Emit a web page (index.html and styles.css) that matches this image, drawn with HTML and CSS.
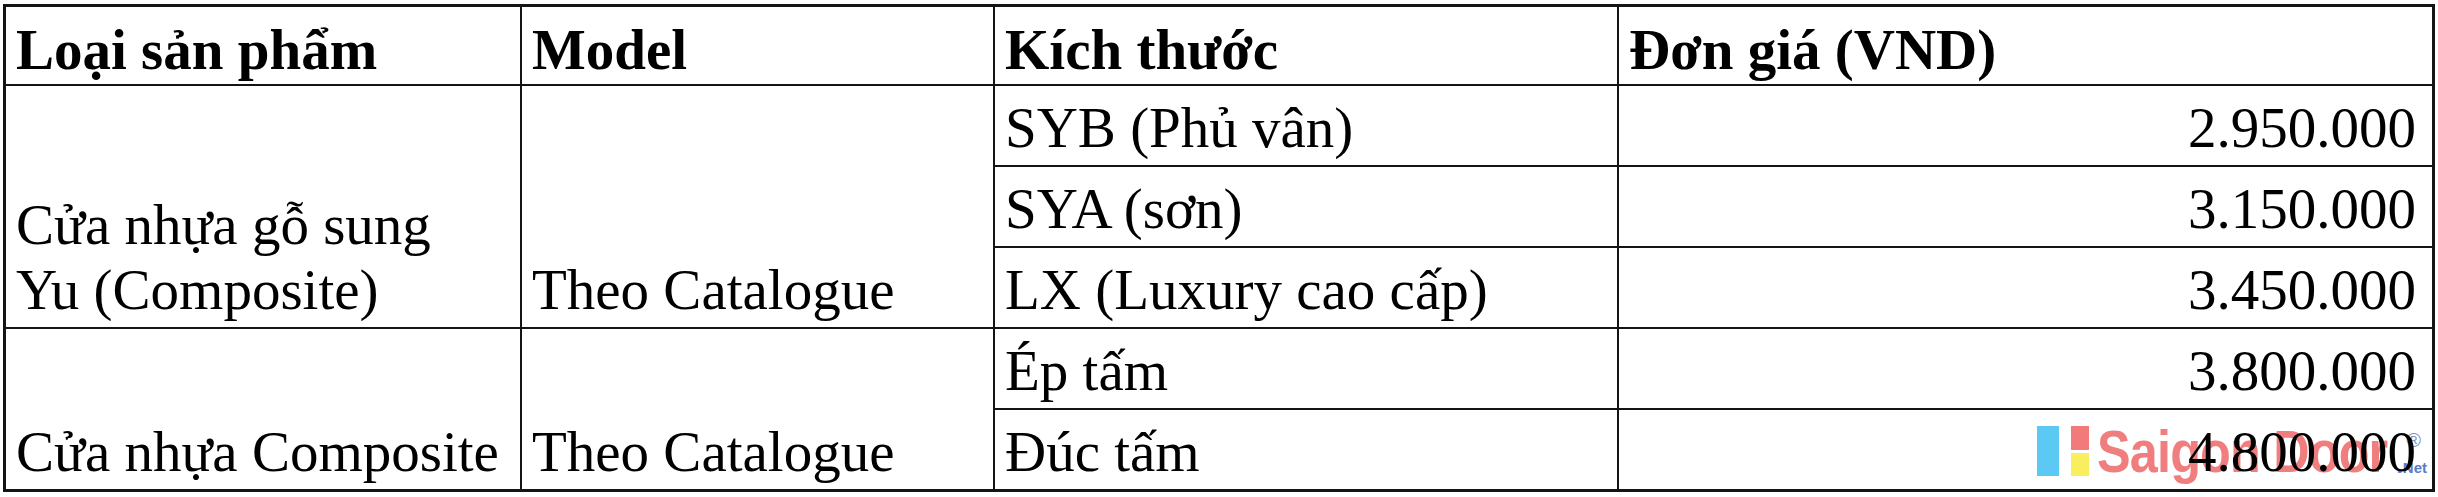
FILE: index.html
```
<!DOCTYPE html>
<html lang="vi">
<head>
<meta charset="utf-8">
<title>Bảng giá cửa nhựa Composite</title>
<link rel="stylesheet" href="styles.css">
</head>
<body>
<div class="sheet">
  <table class="price">
    <colgroup>
      <col class="w1"><col class="w2"><col class="w3"><col class="w4">
    </colgroup>
    <thead>
      <tr class="hdr">
        <th>Loại sản phẩm</th>
        <th>Model</th>
        <th>Kích thước</th>
        <th>Đơn giá (VND)</th>
      </tr>
    </thead>
    <tbody>
      <tr class="row">
        <td rowspan="3">Cửa nhựa gỗ sung<br>Yu (Composite)</td>
        <td rowspan="3">Theo Catalogue</td>
        <td>SYB (Phủ vân)</td>
        <td class="num">2.950.000</td>
      </tr>
      <tr class="row">
        <td>SYA (sơn)</td>
        <td class="num">3.150.000</td>
      </tr>
      <tr class="row">
        <td>LX (Luxury cao cấp)</td>
        <td class="num">3.450.000</td>
      </tr>
      <tr class="row">
        <td rowspan="2">Cửa nhựa Composite</td>
        <td rowspan="2">Theo Catalogue</td>
        <td>Ép tấm</td>
        <td class="num">3.800.000</td>
      </tr>
      <tr class="row">
        <td>Đúc tấm</td>
        <td class="num"><span class="ontop">4.800.000</span></td>
      </tr>
    </tbody>
  </table>
  <div class="watermark">
    <div class="tiles">
      <span class="tile blue"></span>
      <span class="tile red"></span>
      <span class="tile yellow"></span>
    </div>
    <span class="brand">Saigon Door</span>
    <span class="reg">®</span>
    <span class="net"><span class="dot">.</span>Net</span>
  </div>
</div>
</body>
</html>
```
FILE: styles.css
```
html, body {
  margin: 0;
  padding: 0;
  background: #ffffff;
}

.sheet {
  position: relative;
  padding: 4px 0 0 3px;
  width: 2432px;
}

.price {
  table-layout: fixed;
  border-collapse: separate;
  border-spacing: 0;
  width: 2432px;
  border-top: 3px solid #141414;
  border-left: 3px solid #141414;
  border-right: 1px solid #141414;
  border-bottom: 1px solid #141414;
  font-family: "Liberation Serif", "Times New Roman", serif;
  font-size: 57px;
  line-height: 65px;
  color: #000000;
}

.w1 { width: 516px; }
.w2 { width: 473px; }
.w3 { width: 624px; }
.w4 { width: 815px; }

.price th,
.price td {
  box-sizing: border-box;
  border-right: 2px solid #141414;
  border-bottom: 2px solid #141414;
  padding: 0 15px 5px 10px;
  vertical-align: bottom;
  text-align: left;
  white-space: nowrap;
  overflow: hidden;
}

.price th {
  font-weight: bold;
  padding-bottom: 2px;
}

.hdr { height: 79px; }
.row { height: 81px; }

.price td.num {
  text-align: right;
  padding-right: 16px;
}

.ontop {
  position: relative;
  z-index: 2;
}

.watermark {
  position: absolute;
  left: 2037px;
  top: 426px;
  width: 392px;
  height: 52px;
  display: flex;
  align-items: flex-end;
  z-index: 1;
}

.tiles {
  flex: none;
  display: grid;
  grid-template-columns: 22px 18px;
  grid-template-rows: 24px 23px;
  column-gap: 12px;
  row-gap: 3px;
  margin-right: 8px;
  margin-bottom: 2px;
}

.tile { display: block; }
.tile.blue { grid-row: 1 / 3; background: #5cc8f4; }
.tile.red { background: #f27a7a; }
.tile.yellow { background: #f9ee5e; }

.brand {
  flex: none;
  display: inline-block;
  white-space: nowrap;
  font-family: "Liberation Sans", Arial, sans-serif;
  font-weight: bold;
  font-size: 60px;
  line-height: 52px;
  color: #f07474;
  opacity: 0.92;
  letter-spacing: -1px;
  transform: scaleX(0.84);
  transform-origin: left bottom;
}

.reg {
  position: absolute;
  right: 8px;
  top: 4px;
  font-family: "Liberation Sans", Arial, sans-serif;
  font-size: 20px;
  line-height: 20px;
  color: #8094bc;
}

.net {
  position: absolute;
  right: 2px;
  bottom: 3px;
  white-space: nowrap;
  font-family: "Liberation Sans", Arial, sans-serif;
  font-weight: bold;
  font-size: 15px;
  line-height: 15px;
  color: #5a7cc8;
}

.dot {
  font-size: 24px;
  color: #6b8fd8;
}
```
